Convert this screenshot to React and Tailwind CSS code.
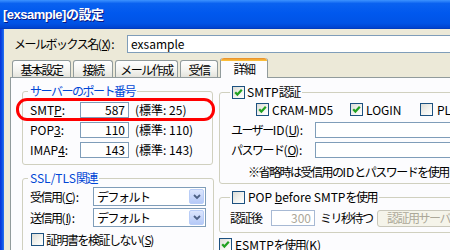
import React from 'react';

// latin runs keep normal spacing; the japanese text is tightened to match MS UI Gothic widths
const L = ({ children }) => <span className="tracking-normal">{children}</span>;

const Check = ({ checked }) => (
  <span className="flex h-[13px] w-[13px] shrink-0 items-center justify-center border border-[#1C5180] bg-[linear-gradient(135deg,#DCDCD7,#F3F3EF_55%,#FFFFFF)]">
    {checked && (
      <svg width="9" height="9" viewBox="0 0 9 9">
        <path d="M1.2 4.2 L3.4 6.6 L7.8 1.8" stroke="#21A121" strokeWidth="2.2" fill="none" />
      </svg>
    )}
  </span>
);

const Edit = ({ value, className = '' }) => (
  <div className={`h-[16px] shrink-0 border border-[#7F9DB9] bg-white leading-[14px] tracking-normal ${className}`}>{value}</div>
);

const Combo = ({ value }) => (
  <div className="flex h-[19px] w-[113px] shrink-0 items-center border border-[#7F9DB9] bg-white pl-[3px] pr-[1px]">
    <span className="flex-1 leading-[14px]">{value}</span>
    <span className="flex h-[15px] w-[15px] items-center justify-center rounded-[2px] border border-[#B9CDF7] bg-[linear-gradient(to_bottom,#DCE6FD,#B5C9F7)]">
      <svg width="8" height="6" viewBox="0 0 8 6">
        <path d="M1 1 L4 4 L7 1" stroke="#4D6185" strokeWidth="1.8" fill="none" />
      </svg>
    </span>
  </div>
);

const Std = ({ n }) => <span className="ml-[6px] tracking-normal">(標準: {n})</span>;

const Tab = ({ label, w, active }) =>
  active ? (
    <div
      className={`relative mb-[-1px] flex h-[20px] items-center justify-center rounded-t-[3px] border-x border-[#919B9C] bg-[#FCFCFE] pt-[2px] ${w}`}
    >
      <span className="absolute left-0 right-0 top-0 h-[3px] rounded-t-[3px] bg-[linear-gradient(to_bottom,#E68B2C,#FFC73C)]" />
      {label}
    </div>
  ) : (
    <div
      className={`flex h-[17px] items-center justify-center rounded-t-[3px] border-x border-t border-[#919B9C] bg-[linear-gradient(to_bottom,#FFFFFF,#F3F3EF_60%,#E4E3DC)] pt-[1px] ${w}`}
    >
      {label}
    </div>
  );

export default function App() {
  return (
    <div className="h-[250px] w-[450px] overflow-hidden whitespace-nowrap bg-[#ECE9D8] text-[12px] leading-[14px] tracking-[-1.5px] text-black font-['Noto_Sans_CJK_JP','Liberation_Sans',sans-serif]">
      {/* title bar */}
      <div className="flex h-[29px] items-center bg-[linear-gradient(to_bottom,#3D93FF_0%,#0A62F0_12%,#0058EE_45%,#0053E6_80%,#0043CF_96%,#0038B5_100%)] pl-[3px] text-[13px] font-bold tracking-[-0.5px] text-white [text-shadow:1px_1px_0_#0A1883] font-['Liberation_Sans','Noto_Sans_CJK_JP',sans-serif]">
        [exsample]の設定
      </div>

      <div className="flex">
        <div className="w-[4px] shrink-0 bg-[linear-gradient(to_right,#0831D9,#0A4CE3_50%,#2A74F2)]" />

        <div className="w-[560px] shrink-0">
          {/* mailbox name */}
          <div className="mt-[6px] flex h-[18px] items-center pl-[10px]">
            <span className="w-[113px] shrink-0">
              メールボックス名<L>(</L>
              <u>X</u>
              <L>):</L>
            </span>
            <div className="h-[18px] w-[340px] shrink-0 border border-[#7F9DB9] bg-white pl-[3px] leading-[16px] tracking-normal">exsample</div>
          </div>

          {/* tabs */}
          <div className="relative z-10 ml-[8px] mt-[5px] flex h-[19px] items-end gap-[2px]">
            <Tab label="基本設定" w="w-[59px]" />
            <Tab label="接続" w="w-[40px]" />
            <Tab label="メール作成" w="w-[63px]" />
            <Tab label="受信" w="w-[38px]" />
            <Tab label="詳細" w="w-[48px]" active />
          </div>

          {/* tab panel */}
          <div className="ml-[6px] flex h-[200px] items-start border border-[#919B9C] bg-[#FCFCFE]">
            {/* left column */}
            <div className="ml-[11px] mt-[6px] flex w-[191px] shrink-0 flex-col">
              <fieldset className="rounded-[3px] border border-[#D0D0BF] px-[7px] pb-[4px] pt-[2px]">
                <legend className="-ml-[2px] px-[2px] leading-[14px] text-[#0046D5]">サーバーのポート番号</legend>
                <div className="relative flex h-[20px] items-center">
                  <span className="w-[50px] shrink-0 tracking-normal">
                    SMT<u>P</u>:
                  </span>
                  <Edit value="587" className="w-[49px] pr-[3px] text-right" />
                  <Std n="25" />
                  <span className="absolute -left-[14px] -top-[2px] h-[23px] w-[199px] rounded-[11px] border-[3px] border-[#FF0000]" />
                </div>
                <div className="flex h-[20px] items-center">
                  <span className="w-[50px] shrink-0 tracking-normal">
                    POP<u>3</u>:
                  </span>
                  <Edit value="110" className="w-[49px] pr-[3px] text-right" />
                  <Std n="110" />
                </div>
                <div className="flex h-[20px] items-center">
                  <span className="w-[50px] shrink-0 tracking-normal">
                    IMAP<u>4</u>:
                  </span>
                  <Edit value="143" className="w-[49px] pr-[3px] text-right" />
                  <Std n="143" />
                </div>
              </fieldset>

              <fieldset className="mt-[6px] rounded-[3px] border border-[#D0D0BF] px-[7px] pb-[6px] pt-[2px]">
                <legend className="-ml-[2px] px-[2px] leading-[14px] text-[#0046D5]">
                  <L>SSL/TLS</L>関連
                </legend>
                <div className="flex h-[19px] items-center">
                  <span className="w-[63px] shrink-0">
                    受信用<L>(</L>
                    <u>C</u>
                    <L>):</L>
                  </span>
                  <Combo value="デフォルト" />
                </div>
                <div className="mt-[2px] flex h-[19px] items-center">
                  <span className="w-[63px] shrink-0">
                    送信用<L>(</L>
                    <u>I</u>
                    <L>):</L>
                  </span>
                  <Combo value="デフォルト" />
                </div>
                <div className="mt-[6px] flex h-[13px] items-center gap-[2px] pl-[1px]">
                  <Check />
                  <span>
                    証明書を検証しない<L>(</L>
                    <u>S</u>
                    <L>)</L>
                  </span>
                </div>
              </fieldset>
            </div>

            {/* right column */}
            <div className="ml-[6px] mt-[7px] flex w-[300px] shrink-0 flex-col">
              <fieldset className="rounded-[3px] border border-[#D0D0BF] pb-[4px] pl-[11px] pt-0">
                <legend className="-ml-[1px] px-[2px] leading-[14px]">
                  <span className="flex items-center gap-[2px]">
                    <Check checked />
                    <span>
                      <L>SMTP</L>認証
                    </span>
                  </span>
                </legend>
                <div className="mt-[4px] flex h-[13px] items-center pl-[25px] tracking-normal">
                  <div className="flex w-[94px] shrink-0 items-center gap-[3px]">
                    <Check checked />
                    CRAM-MD5
                  </div>
                  <div className="flex w-[70px] shrink-0 items-center gap-[3px]">
                    <Check checked />
                    LOGIN
                  </div>
                  <div className="flex items-center gap-[4px]">
                    <Check />
                    PLAIN
                  </div>
                </div>
                <div className="mt-[4px] flex h-[20px] items-center">
                  <span className="w-[84px] shrink-0">
                    ユーザー<L>ID(</L>
                    <u>U</u>
                    <L>):</L>
                  </span>
                  <Edit className="w-[200px]" />
                </div>
                <div className="flex h-[20px] items-center">
                  <span className="w-[84px] shrink-0">
                    パスワード<L>(</L>
                    <u>O</u>
                    <L>):</L>
                  </span>
                  <Edit className="w-[200px]" />
                </div>
                <div className="mt-[5px] h-[14px] pl-[17px]">
                  ※省略時は受信用の<L>ID</L>とパスワードを使用
                </div>
              </fieldset>

              <fieldset className="mt-[6px] rounded-[3px] border border-[#D0D0BF] pb-[4px] pl-[10px] pt-0">
                <legend className="px-[2px] leading-[14px]">
                  <span className="flex items-center gap-[3px]">
                    <Check />
                    <span>
                      <L>
                        POP <u>b</u>efore SMTP
                      </L>
                      を使用
                    </span>
                  </span>
                </legend>
                <div className="mt-[4px] flex h-[20px] items-center">
                  <span className="w-[41px] shrink-0">認証後</span>
                  <div className="h-[16px] w-[44px] shrink-0 border border-[#A7B9D4] bg-white pr-[3px] text-right leading-[14px] tracking-normal text-[#ACA899]">
                    300
                  </div>
                  <span className="ml-[5px] w-[57px] shrink-0">ミリ秒待つ</span>
                  <div className="flex h-[17px] w-[100px] shrink-0 items-center rounded-[3px] border border-[#C9C7BA] bg-[#F5F4EA] pl-[9px] text-[#ACA899]">
                    認証用サーバー
                  </div>
                </div>
              </fieldset>

              <div className="mt-[5px] flex h-[13px] items-center gap-[3px]">
                <Check checked />
                <span>
                  <L>ESMTP</L>を使用<L>(K)</L>
                </span>
              </div>
            </div>
          </div>
        </div>
      </div>
    </div>
  );
}
